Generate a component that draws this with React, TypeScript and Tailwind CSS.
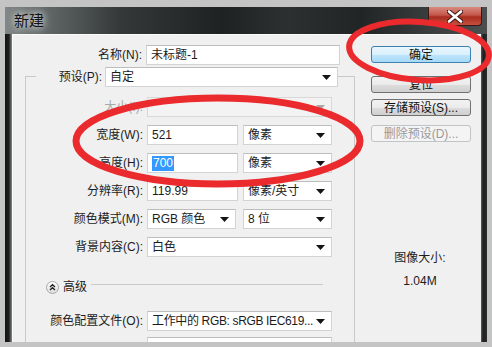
import type { ReactNode } from 'react';

const Arrow = ({ disabled }: { disabled?: boolean }) => (
  <svg width="9" height="5" viewBox="0 0 9 5" className="shrink-0">
    <path d="M0 0h9L4.5 5z" fill={disabled ? '#a9a9a9' : '#141414'} />
  </svg>
);

const Input = ({ w, children }: { w: string; children?: ReactNode }) => (
  <div className={`${w} h-[20px] bg-white border border-[#d3d3d3] border-t-[#bdbdbd] pl-[4px] flex items-center whitespace-nowrap`}>
    {children}
  </div>
);

const Select = ({ w, value, disabled, tight }: { w: string; value?: string; disabled?: boolean; tight?: boolean }) => (
  <div
    className={`${w} h-[20px] border pl-[4px] pr-[6px] flex items-center justify-between gap-[2px] ${
      disabled ? 'bg-[#f3f3f3] border-[#d8d8d8]' : 'bg-white border-[#d3d3d3] border-t-[#bdbdbd]'
    }`}
  >
    <span className={`whitespace-nowrap overflow-hidden ${tight ? 'tracking-[-0.35px]' : ''}`}>{value}</span>
    <Arrow disabled={disabled} />
  </div>
);

const Row = ({ label, children, className = '', muted }: { label: string; children: ReactNode; className?: string; muted?: boolean }) => (
  <div className={`flex items-center h-[20px] ${className}`}>
    <div className={`w-[117px] text-right whitespace-nowrap ${muted ? 'text-[#a8a8a8]' : ''}`}>{label}</div>
    <div className="ml-[4px] flex">{children}</div>
  </div>
);

const Button = ({ children, variant = 'normal', className = '' }: { children: ReactNode; variant?: 'normal' | 'default' | 'disabled'; className?: string }) => {
  const look =
    variant === 'default'
      ? 'border-[#3c7fb1] bg-[linear-gradient(#eaf6fd_0%,#d9f0fc_50%,#bee6fd_51%,#a7d9f5_100%)] text-[#111]'
      : variant === 'disabled'
        ? 'border-[#c0c4c6] bg-[#f4f4f4] text-[#9a9a9a]'
        : 'border-[#707070] bg-[linear-gradient(#f2f2f2_0%,#ebebeb_50%,#dddddd_51%,#cfcfcf_100%)] text-[#111]';
  return (
    <div className={`w-[100px] h-[17px] border rounded-[3px] flex items-center justify-center leading-none ${look} ${className}`}>
      {children}
    </div>
  );
};

export default function App() {
  return (
    <div className="relative w-[492px] h-[347px] overflow-hidden bg-[#c4c4c4] pt-[7px] pl-[5px] text-[12px] text-[#1c1c1c] font-['Liberation_Sans','Noto_Sans_CJK_SC',sans-serif]">
      <div className="w-[482px] h-[335px] flex flex-col bg-[#262929]">
        {/* title bar */}
        <div className="h-[27px] shrink-0 flex items-start bg-[linear-gradient(90deg,#818787_0%,#636969_8%,#343838_24%,#1f2222_45%,#2d3030_58%,#222525_74%,#3a3d3d_88%,#4c4f4f_100%)]">
          <div className="pl-[9px] pt-[5px] text-[15px] leading-[17px] text-[#121212] [text-shadow:0_0_6px_#e4e8e8,0_0_10px_#cfd4d4]">
            新建
          </div>
          <div className="ml-auto mr-[5px] w-[54px] h-[19px] rounded-b-[4px] border border-t-0 border-[#3b1815] bg-[linear-gradient(#d88a7f_0%,#c4584b_45%,#a92c20_55%,#c5503f_100%)] flex items-center justify-center">
            <svg width="16" height="13" viewBox="0 0 16 13">
              <path d="M2 1.5L14 11.5M14 1.5L2 11.5" stroke="#3a1410" strokeWidth="4.5" strokeLinecap="round" />
              <path d="M2 1.5L14 11.5M14 1.5L2 11.5" stroke="#ffffff" strokeWidth="2.6" strokeLinecap="round" />
            </svg>
          </div>
        </div>

        <div className="flex-1 min-h-0 flex">
          {/* left frame */}
          <div className="w-[7px] bg-[linear-gradient(90deg,#111313_0%,#1c1e1e_55%,#8a8d8d_100%)]" />

          {/* client */}
          <div className="w-[469px] overflow-hidden bg-[#f0f0f0] border-t border-l border-[#fbfbfb] flex">
            {/* left part */}
            <div className="w-[341px] pt-[10px] flex flex-col">
              <div className="flex items-center h-[19px]">
                <div className="w-[129px] text-right">名称(N):</div>
                <div className="ml-[4px]">
                  <Input w="w-[194px]">未标题-1</Input>
                </div>
              </div>

              <div className="mt-[12px] ml-[12px] w-[330px] flex-1 border-l border-t border-r border-[#c9c9c9]">
                <div className="-mt-[10px] ml-[10px] w-[302px] bg-[#f0f0f0] flex items-center h-[20px]">
                  <div className="w-[66px] text-right">预设(P):</div>
                  <div className="ml-[3px]">
                    <Select w="w-[233px]" value="自定" />
                  </div>
                </div>

                <Row label="大小(I):" muted className="mt-[10px]">
                  <Select w="w-[185px]" disabled />
                </Row>
                <Row label="宽度(W):" className="mt-[8px]">
                  <Input w="w-[91px]">521</Input>
                  <div className="ml-[5px]">
                    <Select w="w-[89px]" value="像素" />
                  </div>
                </Row>
                <Row label="高度(H):" className="mt-[8px]">
                  <Input w="w-[91px]">
                    <span className="bg-[#3399ff] text-white px-[1px] leading-[15px]">700</span>
                  </Input>
                  <div className="ml-[5px]">
                    <Select w="w-[89px]" value="像素" />
                  </div>
                </Row>
                <Row label="分辨率(R):" className="mt-[8px]">
                  <Input w="w-[91px]">119.99</Input>
                  <div className="ml-[5px]">
                    <Select w="w-[89px]" value="像素/英寸" />
                  </div>
                </Row>
                <Row label="颜色模式(M):" className="mt-[8px]">
                  <Select w="w-[89px]" value="RGB 颜色" />
                  <div className="ml-[7px]">
                    <Select w="w-[89px]" value="8 位" />
                  </div>
                </Row>
                <Row label="背景内容(C):" className="mt-[8px]">
                  <Select w="w-[185px]" value="白色" />
                </Row>

                <div className="mt-[23px] h-[14px] flex items-center pl-[20px]">
                  <svg width="13" height="13" viewBox="0 0 13 13" className="shrink-0">
                    <defs>
                      <linearGradient id="adv" x1="0" y1="0" x2="0" y2="1">
                        <stop offset="0" stopColor="#ffffff" />
                        <stop offset="1" stopColor="#dcdcdc" />
                      </linearGradient>
                    </defs>
                    <circle cx="6.5" cy="6.5" r="6" fill="url(#adv)" stroke="#a9a9a9" />
                    <path d="M4 6l2.5-2.3L9 6M4 9l2.5-2.3L9 9" fill="none" stroke="#222" strokeWidth="1.3" />
                  </svg>
                  <span className="ml-[4px]">高级</span>
                  <div className="ml-[4px] mr-[31px] flex-1 h-px bg-[#c9c9c9] -mt-[5px]" />
                </div>

                <Row label="颜色配置文件(O):" className="mt-[17px]">
                  <Select w="w-[185px]" value="工作中的 RGB: sRGB IEC619..." tight />
                </Row>
                <div className="mt-[6px] ml-[121px]">
                  <Input w="w-[185px]" />
                </div>
              </div>
            </div>

            {/* right part */}
            <div className="flex-1 flex flex-col pt-[10px] pl-[17px]">
              <Button variant="default" className="mt-[1px]">确定</Button>
              <Button className="mt-[13px]">复位</Button>
              <Button className="mt-[6px]">存储预设(S)...</Button>
              <Button variant="disabled" className="mt-[9px]">删除预设(D)...</Button>
              <div className="mt-[108px] -ml-[12px] text-center leading-[16px]">图像大小:</div>
              <div className="mt-[7px] -ml-[12px] text-center leading-[16px]">1.04M</div>
            </div>
          </div>

          {/* right frame */}
          <div className="w-[6px] bg-[linear-gradient(90deg,#5a5d5d_0%,#1e2020_35%,#2a2c2c_100%)]" />
        </div>
      </div>

      {/* red annotation marks */}
      <svg className="absolute inset-0 pointer-events-none" width="492" height="347" viewBox="0 0 492 347">
        <ellipse cx="419" cy="51" rx="70" ry="29" fill="none" stroke="#ea2a2d" strokeWidth="6" transform="rotate(4 419 51)" />
        <ellipse cx="218" cy="141" rx="142" ry="43" fill="none" stroke="#ea2a2d" strokeWidth="7" />
      </svg>
    </div>
  );
}
